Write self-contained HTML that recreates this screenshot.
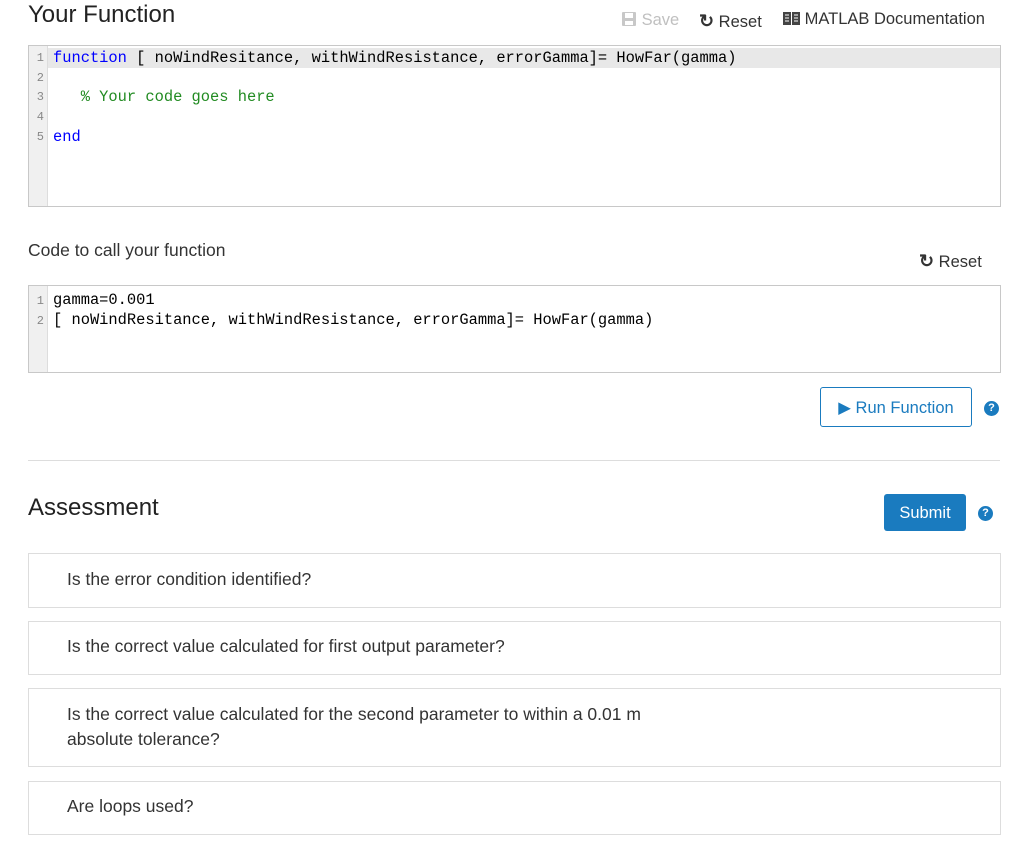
<!DOCTYPE html>
<html><head><style>
body{margin:0;background:#fff;font-family:"Liberation Sans",sans-serif;color:#212121;width:1024px;height:866px;position:relative;overflow:hidden}
.a{position:absolute}
.ed{position:absolute;left:28px;width:971px;border:1px solid #c8c8c8;background:#fff}
.gut{position:absolute;left:0;top:0;bottom:0;width:18px;background:#f0f0f0;border-right:1px solid #ddd}
.ln{position:absolute;left:0;width:15px;text-align:right;font:12px "Liberation Mono",monospace;color:#888}
.cd{position:absolute;left:24px;font:15.4px/20px "Liberation Mono",monospace;color:#000;white-space:pre}
.kw{color:#0000ff}.cm{color:#228b22}
.box{position:absolute;left:28px;width:971px;border:1px solid #ddd;font-size:17.5px;color:#333}
.box span{position:absolute;left:38px}
.q{position:absolute;width:15px;height:15px;border-radius:50%;background:#1a7bbf;color:#fff;font:bold 11px/15px "Liberation Sans",sans-serif;text-align:center}
</style></head><body>
<div class="a" style="left:28px;top:1px;font-size:24px;color:#222">Your Function</div>
<div class="a" style="left:621px;top:11px;font-size:16.5px;color:#c0c0c0">
<svg width="16" height="16" viewBox="0 0 16 16" style="vertical-align:-2px"><rect x="1" y="1" width="14" height="14" rx="1" fill="#c8c8c8"/><rect x="4" y="2" width="8" height="5" fill="#fff"/><rect x="4" y="10" width="8" height="4" fill="#fff"/></svg> Save</div>
<div class="a" style="left:699px;top:11px;font-size:16.5px;color:#333"><span style="font-weight:bold;font-size:18px">&#x21BB;</span> Reset</div>
<div class="a" style="left:783px;top:10px;font-size:16.5px;color:#333">
<svg width="17" height="15" viewBox="0 0 17 15" style="vertical-align:-2px"><rect x="0" y="1" width="8" height="13" fill="#444"/><rect x="9" y="1" width="8" height="13" fill="#444"/><path d="M2 4h4M2 7h4M2 10h4M11 4h4M11 7h4M11 10h4" stroke="#fff" stroke-width="1"/></svg> MATLAB Documentation</div>

<div class="ed" style="top:45px;height:160px">
<div class="gut"></div>
<div class="a" style="left:19px;right:0;top:2px;height:20px;background:#e8e8e8"></div>
<div class="ln" style="top:5px">1</div><div class="ln" style="top:25px">2</div><div class="ln" style="top:44px">3</div><div class="ln" style="top:64px">4</div><div class="ln" style="top:84px">5</div>
<div class="cd" style="top:2px"><span class="kw">function</span> [ noWindResitance, withWindResistance, errorGamma]= HowFar(gamma)</div>
<div class="cd cm" style="top:41px">   % Your code goes here</div>
<div class="cd kw" style="top:81px">end</div>
</div>

<div class="a" style="left:28px;top:240px;font-size:17.5px;color:#333">Code to call your function</div>
<div class="a" style="left:919px;top:251px;font-size:16.5px;color:#333"><span style="font-weight:bold;font-size:18px">&#x21BB;</span> Reset</div>

<div class="ed" style="top:285px;height:86px">
<div class="gut"></div>
<div class="ln" style="top:8px">1</div><div class="ln" style="top:28px">2</div>
<div class="cd" style="top:4px">gamma=0.001
[ noWindResitance, withWindResistance, errorGamma]= HowFar(gamma)</div>
</div>

<div class="a" style="left:820px;top:387px;width:150px;height:38px;border:1px solid #1a7bbf;border-radius:3px;color:#1a7bbf;font-size:16.5px;line-height:40px;text-align:center">&#9654; Run Function</div>
<div class="q" style="left:984px;top:401px">?</div>
<div class="a" style="left:28px;top:460px;width:972px;height:1px;background:#ddd"></div>

<div class="a" style="left:28px;top:494px;font-size:24px;color:#222">Assessment</div>
<div class="a" style="left:884px;top:494px;width:82px;height:37px;background:#1a7bbf;border-radius:3px;color:#fff;font-size:16.5px;line-height:39px;text-align:center">Submit</div>
<div class="q" style="left:978px;top:506px">?</div>

<div class="box" style="top:553px;height:53px"><span style="top:15px">Is the error condition identified?</span></div>
<div class="box" style="top:621px;height:52px"><span style="top:14px">Is the correct value calculated for first output parameter?</span></div>
<div class="box" style="top:688px;height:77px"><span style="top:13px;line-height:25px">Is the correct value calculated for the second parameter to within a 0.01 m<br>absolute tolerance?</span></div>
<div class="box" style="top:781px;height:52px"><span style="top:14px">Are loops used?</span></div>
</body></html>
